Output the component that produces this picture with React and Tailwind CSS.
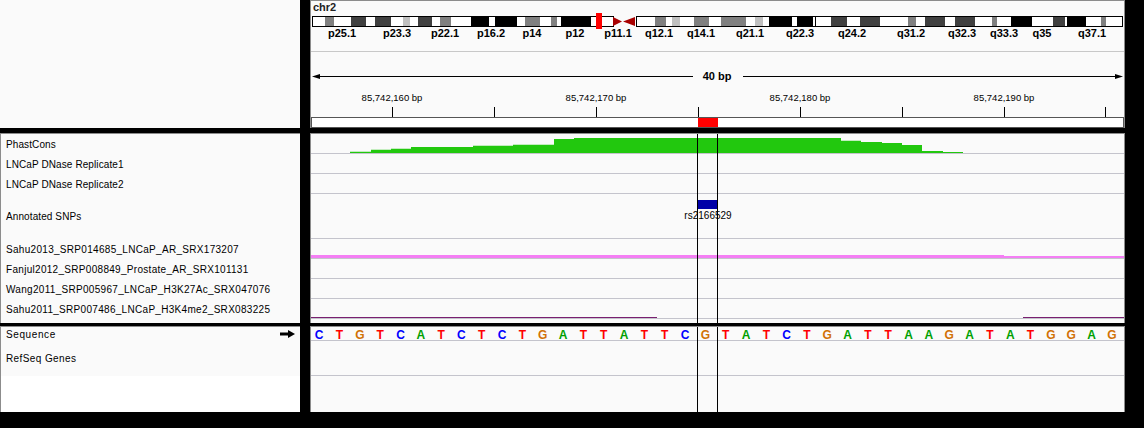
import React from "react";

// chromosome 2 bands, absolute x from the screen (start, end, shade)
const BANDS = [
  [312, 325, "w"], [325, 334, "g"], [334, 351, "w"], [351, 366, "d"], [366, 375, "w"],
  [375, 391, "d"], [391, 403, "w"], [403, 410, "l"], [410, 418, "w"], [418, 432, "d"],
  [432, 440, "w"], [440, 451, "g"], [451, 471, "w"], [471, 489, "k"], [489, 495, "w"],
  [495, 517, "k"], [517, 525, "w"], [525, 540, "g"], [540, 551, "w"], [551, 557, "g"],
  [557, 561, "w"], [561, 591, "k"], [591, 614, "w"],
  [636, 655, "w"], [655, 666, "g"], [666, 672, "w"], [672, 680, "l"], [680, 694, "w"],
  [694, 709, "g"], [709, 721, "w"], [721, 746, "g"], [746, 755, "w"], [755, 763, "l"],
  [763, 769, "w"], [769, 792, "k"], [792, 797, "w"], [797, 813, "k"], [813, 815, "w"],
  [815, 816, "k"], [816, 831, "w"], [831, 847, "d"], [847, 860, "w"], [860, 880, "d"],
  [880, 908, "w"], [908, 916, "g"], [916, 925, "w"], [925, 945, "d"], [945, 955, "w"],
  [955, 975, "d"], [975, 992, "w"], [992, 997, "g"], [997, 1011, "w"], [1011, 1032, "k"],
  [1032, 1053, "w"], [1053, 1065, "d"], [1065, 1067, "w"], [1067, 1086, "k"], [1086, 1101, "w"],
  [1101, 1106, "g"], [1106, 1123, "w"],
];

const SHADE = { w: "#ffffff", g: "#808080", d: "#404040", l: "#c0c0c0", k: "#000000" };

const BAND_LABELS = [
  ["p25.1", 31], ["p23.3", 86], ["p22.1", 134], ["p16.2", 180], ["p14", 221],
  ["p12", 264], ["p11.1", 307], ["q12.1", 348], ["q14.1", 390], ["q21.1", 439],
  ["q22.3", 489], ["q24.2", 541], ["q31.2", 600], ["q32.3", 651], ["q33.3", 693],
  ["q35", 731], ["q37.1", 781],
];

const TICKS = [81, 183, 285, 387, 489, 591, 693, 794];
const TICK_LABELS = [
  ["85,742,160 bp", 81], ["85,742,170 bp", 285], ["85,742,180 bp", 489], ["85,742,190 bp", 693],
];

// phastcons steps: x from, x to, top (row is 19px tall)
const PHAST = [
  [39, 60, 17.7], [60, 80, 15.7], [80, 100, 14.7], [100, 162, 13], [162, 202, 11.7],
  [202, 243, 10.7], [243, 263, 5], [263, 530, 4], [530, 550, 6.7], [550, 571, 8],
  [571, 591, 9], [591, 611, 11], [611, 632, 17], [632, 652, 18],
];

const SEQ = "CTGTCATCTCTGATTATTCGTATCTGATTAAGATATGGAG";
const BASE_COLOR = { A: "text-[#00a000]", C: "text-[#0000ff]", G: "text-[#d17105]", T: "text-[#ff0000]" };

const TRACKS = [
  { name: "PhastCons", h: "h-[20px]" },
  { name: "LNCaP DNase Replicate1", h: "h-[20px]" },
  { name: "LNCaP DNase Replicate2", h: "h-[20px]" },
  { name: "Annotated SNPs", h: "h-[45px]" },
  { name: "Sahu2013_SRP014685_LNCaP_AR_SRX173207", h: "h-[20px]", wide: true },
  { name: "Fanjul2012_SRP008849_Prostate_AR_SRX101131", h: "h-[20px]", wide: true },
  { name: "Wang2011_SRP005967_LNCaP_H3K27Ac_SRX047076", h: "h-[20px]", wide: true },
  { name: "Sahu2011_SRP007486_LNCaP_H3K4me2_SRX083225", h: "h-[20px]", wide: true },
];

function phastPath() {
  let d = `M ${PHAST[0][0]} 19`;
  PHAST.forEach(([a, b, t]) => {
    d += ` L ${a} ${t} L ${b} ${t}`;
  });
  d += ` L ${PHAST[PHAST.length - 1][1]} 19 Z`;
  return d;
}

function Ideogram() {
  return (
    <svg width="813" height="14" className="block overflow-visible">
      {BANDS.map(([a, b, c], i) => (
        <rect key={i} x={a - 311} y="3" width={b - a} height="11" fill={SHADE[c]} />
      ))}
      <rect x="1.5" y="3.5" width="301" height="10" fill="none" stroke="#000" />
      <rect x="325.5" y="3.5" width="486" height="10" fill="none" stroke="#000" />
      <polygon points="302,4 311,8.5 302,13" fill="#a80000" />
      <polygon points="324,4 312,8.5 324,13" fill="#a80000" />
      <rect x="285" y="0" width="6" height="16" fill="#ff0000" />
    </svg>
  );
}

function Ruler() {
  return (
    <div className="relative h-[65px]">
      <svg width="813" height="65" className="block">
        <line x1="4" y1="24.5" x2="382" y2="24.5" stroke="#000" />
        <line x1="432" y1="24.5" x2="808" y2="24.5" stroke="#000" />
        <polygon points="1,24.5 9,22 9,27" fill="#000" />
        <polygon points="812,24.5 804,22 804,27" fill="#000" />
        {TICKS.map((x) => (
          <line key={x} x1={x + 0.5} y1="55" x2={x + 0.5} y2="65" stroke="#000" />
        ))}
      </svg>
      <span className="absolute left-[406px] top-[18px] -translate-x-1/2 text-[11px] font-bold leading-[12px]">
        40 bp
      </span>
      {TICK_LABELS.map(([t, x]) => (
        <span
          key={t}
          className="absolute top-[41px] -translate-x-1/2 whitespace-nowrap text-[9.5px] leading-[10px]"
          style={{ left: x }}
        >
          {t}
        </span>
      ))}
    </div>
  );
}

function Cursor() {
  return (
    <>
      <div className="absolute top-0 bottom-0 left-[386px] w-px bg-black" />
      <div className="absolute top-0 bottom-0 left-[406px] w-px bg-black" />
    </>
  );
}

export default function App() {
  return (
    <div className="w-[1144px] h-[428px] bg-black flex flex-col overflow-hidden font-['Liberation_Sans',Arial,sans-serif] text-black">
      {/* header */}
      <div className="flex h-[128px] shrink-0">
        <div className="w-[300px] bg-[#fafafa]" />
        <div className="ml-[10px] w-[815px] bg-[#fafafa] border border-b-0 border-[#8c8c8c] flex flex-col">
          <div className="h-[12px] pl-[2px] text-[11px] font-bold leading-[12px] text-[#222]">chr2</div>
          <Ideogram />
          <div className="relative h-[25px] border-b border-[#c8c8c8]">
            {BAND_LABELS.map(([t, x]) => (
              <span
                key={t}
                className="absolute top-[1px] -translate-x-1/2 text-[11px] font-bold leading-[11px]"
                style={{ left: x }}
              >
                {t}
              </span>
            ))}
          </div>
          <Ruler />
          <div className="relative h-[11px] border border-[#555] bg-white">
            <div className="absolute top-0 bottom-0 left-[386px] w-[20px] bg-[#ff0000]" />
          </div>
        </div>
      </div>

      {/* data tracks */}
      <div className="flex h-[190px] mt-[5px] shrink-0">
        <div className="w-[300px] bg-[#fafafa] border-t border-l border-[#8c8c8c] flex flex-col">
          {TRACKS.map((t) => (
            <div
              key={t.name}
              className={`${t.h} ${t.wide ? "tracking-[0.3px]" : "tracking-[0.1px]"} flex items-center pl-[5px] text-[10px] whitespace-nowrap`}
            >
              {t.name}
            </div>
          ))}
        </div>
        <div className="relative ml-[10px] w-[815px] bg-[#fafafa] border-t border-x border-[#8c8c8c] flex flex-col">
          <div className="h-[20px] border-b border-[#c4c4cc]">
            <svg width="813" height="19" className="block">
              <path d={phastPath()} fill="#22c80e" />
            </svg>
          </div>
          <div className="h-[20px] border-b border-[#c4c4cc]" />
          <div className="h-[20px] border-b border-[#c4c4cc]" />
          <div className="relative h-[45px] border-b border-[#c4c4cc]">
            <div className="absolute left-[387px] top-[6px] w-[20px] h-[9px] bg-[#0000a8]" />
            <span className="absolute left-[397px] top-[16px] -translate-x-1/2 text-[10px] leading-[11px]">rs2166529</span>
          </div>
          <div className="h-[20px] border-b border-[#c4c4cc]">
            <svg width="813" height="19" className="block">
              <rect x="0" y="16" width="693" height="3" fill="#f47ef4" />
              <rect x="693" y="17" width="120" height="2" fill="#f47ef4" />
            </svg>
          </div>
          <div className="h-[20px] border-b border-[#c4c4cc]" />
          <div className="h-[20px] border-b border-[#c4c4cc]" />
          <div className="h-[20px] border-b border-[#c4c4cc]">
            <svg width="813" height="19" className="block">
              <rect x="0" y="18" width="346" height="1" fill="#7a2070" />
              <rect x="712" y="18" width="101" height="1" fill="#7a2070" />
            </svg>
          </div>
          <Cursor />
        </div>
      </div>

      {/* sequence & genes */}
      <div className="flex h-[86px] mt-[3px] shrink-0">
        <div className="w-[300px] bg-white border-t border-l border-[#8c8c8c] flex flex-col">
          <div className="h-[14px] bg-[#fafafa] flex items-center justify-between pl-[5px] pr-[5px] text-[10px] tracking-[0.6px]">
            <span>Sequence</span>
            <svg width="15" height="8" viewBox="0 0 15 8">
              <rect x="0" y="2.5" width="9" height="3" fill="#000" />
              <polygon points="8,0 15,4 8,8" fill="#000" />
            </svg>
          </div>
          <div className="h-[35px] bg-[#fafafa] flex items-center pl-[5px] text-[10px] tracking-[0.4px]">RefSeq Genes</div>
        </div>
        <div className="relative ml-[10px] w-[815px] bg-[#fafafa] border-t border-x border-[#8c8c8c] flex flex-col">
          <div className="h-[14px] border-b border-[#c4c4cc] grid grid-cols-[repeat(40,minmax(0,1fr))]">
            {SEQ.split("").map((b, i) => (
              <span key={i} className={`${BASE_COLOR[b]} pr-[4px] pt-[2px] text-center text-[12px] font-bold leading-[12px]`}>
                {b}
              </span>
            ))}
          </div>
          <div className="h-[35px] border-b border-[#c4c4cc]" />
          <Cursor />
        </div>
      </div>
    </div>
  );
}
